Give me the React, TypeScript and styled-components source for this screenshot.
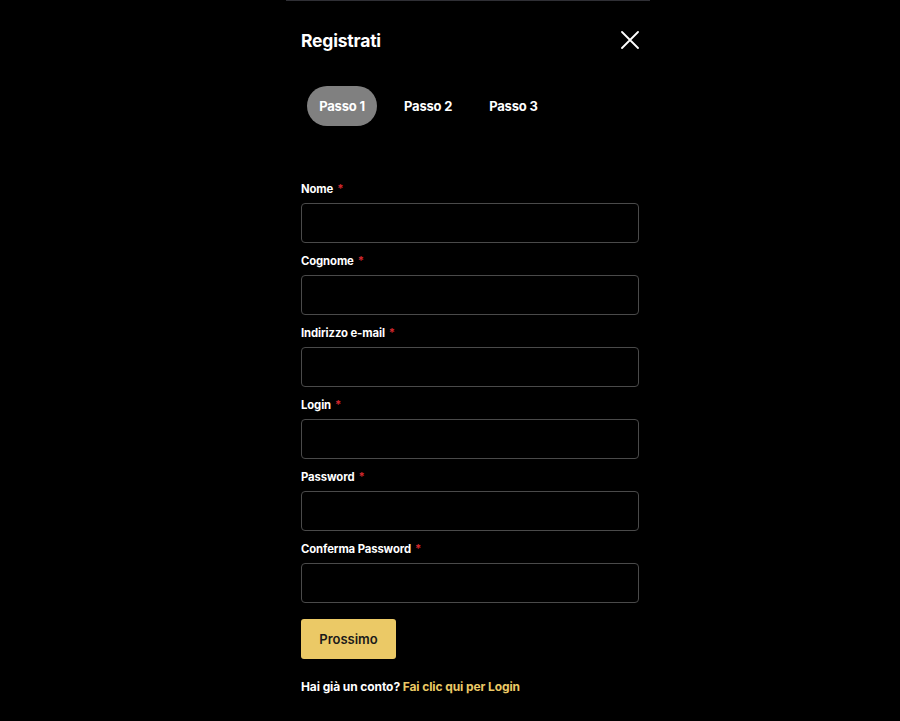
import React from "react";
import styled, { createGlobalStyle } from "styled-components";

const Global = createGlobalStyle`
  html, body { margin: 0; padding: 0; background: #000; }
  body { font-family: Inter, "Noto Sans", sans-serif; color: #fff; }
  * { box-sizing: border-box; }
`;

const Page = styled.div`
  display: flex;
  justify-content: center;
  min-height: 721px;
  padding-left: 36px;
  background: #000;
`;

const Panel = styled.div`
  width: 364px;
  border-top: 1px solid #2f2f35;
  padding: 0 10px 0 15px;
  display: flex;
  flex-direction: column;
`;

const Header = styled.div`
  display: flex;
  align-items: center;
  justify-content: space-between;
  height: 38px;
  margin-top: 20px;
`;

const Title = styled.h1`
  margin: 0;
  font-size: 17.5px;
  font-weight: 700;
  letter-spacing: -0.2px;
`;

const Close = styled.button`
  background: none;
  border: 0;
  padding: 0;
  width: 20px;
  height: 20px;
  display: flex;
  align-items: center;
  justify-content: center;
  color: #fff;
  cursor: pointer;
`;

const Tabs = styled.div`
  display: flex;
  align-items: center;
  gap: 12px;
  margin-top: 27px;
  padding-left: 6px;
`;

const Tab = styled.div<{ $active?: boolean }>`
  height: 40px;
  padding: 0 12px;
  border-radius: 20px;
  display: flex;
  align-items: center;
  font-size: 13px;
  font-weight: 700;
  letter-spacing: -0.2px;
  background: ${(p) => (p.$active ? "#808080" : "transparent")};
  width: ${(p) => (p.$active ? "70px" : "auto")};
  justify-content: center;
  margin-right: ${(p) => (p.$active ? "2px" : "0")};
  margin-left: ${(p) => (p.$active ? "0" : "1px")};
`;

const Form = styled.form`
  display: flex;
  flex-direction: column;
  margin-top: 56px;
  width: 338px;
`;

const Field = styled.div`
  display: flex;
  flex-direction: column;
  margin-bottom: 11px;
`;

const Label = styled.label`
  font-size: 11.3px;
  font-weight: 700;
  line-height: 14px;
  margin-bottom: 7px;
  letter-spacing: -0.1px;
`;

const Req = styled.span`
  color: #d0272d;
  margin-left: 4px;
`;

const Input = styled.input`
  height: 40px;
  width: 100%;
  background: #000;
  border: 1px solid #4a4a4a;
  border-radius: 4px;
  color: #fff;
  font-size: 13px;
  padding: 0 10px;
  outline: none;
`;

const Submit = styled.button`
  width: 95px;
  height: 40px;
  background: #ebc966;
  border: 0;
  border-radius: 3px;
  color: #1a1a1a;
  font-family: Inter, "Noto Sans", sans-serif;
  font-size: 13px;
  font-weight: 600;
  margin-top: 5px;
  cursor: pointer;
`;

const Footer = styled.p`
  margin: 20px 0 0;
  font-size: 12px;
  font-weight: 700;
  letter-spacing: -0.1px;
`;

const Link = styled.a`
  color: #ebc966;
  text-decoration: none;
`;

const fields = ["Nome", "Cognome", "Indirizzo e-mail", "Login", "Password", "Conferma Password"];

export default function App() {
  return (
    <>
      <Global />
      <Page>
        <Panel>
          <Header>
            <Title>Registrati</Title>
            <Close aria-label="Chiudi">
              <svg width="18" height="18" viewBox="0 0 18 18" fill="none" stroke="#fff" strokeWidth="1.8" strokeLinecap="round">
                <path d="M1 1L17 17M17 1L1 17" />
              </svg>
            </Close>
          </Header>
          <Tabs>
            <Tab $active>Passo 1</Tab>
            <Tab>Passo 2</Tab>
            <Tab>Passo 3</Tab>
          </Tabs>
          <Form onSubmit={(e) => e.preventDefault()}>
            {fields.map((f) => (
              <Field key={f}>
                <Label>
                  {f}
                  <Req>*</Req>
                </Label>
                <Input type={f.includes("Password") ? "password" : "text"} />
              </Field>
            ))}
            <Submit type="submit">Prossimo</Submit>
            <Footer>
              Hai già un conto? <Link href="#">Fai clic qui per Login</Link>
            </Footer>
          </Form>
        </Panel>
      </Page>
    </>
  );
}
